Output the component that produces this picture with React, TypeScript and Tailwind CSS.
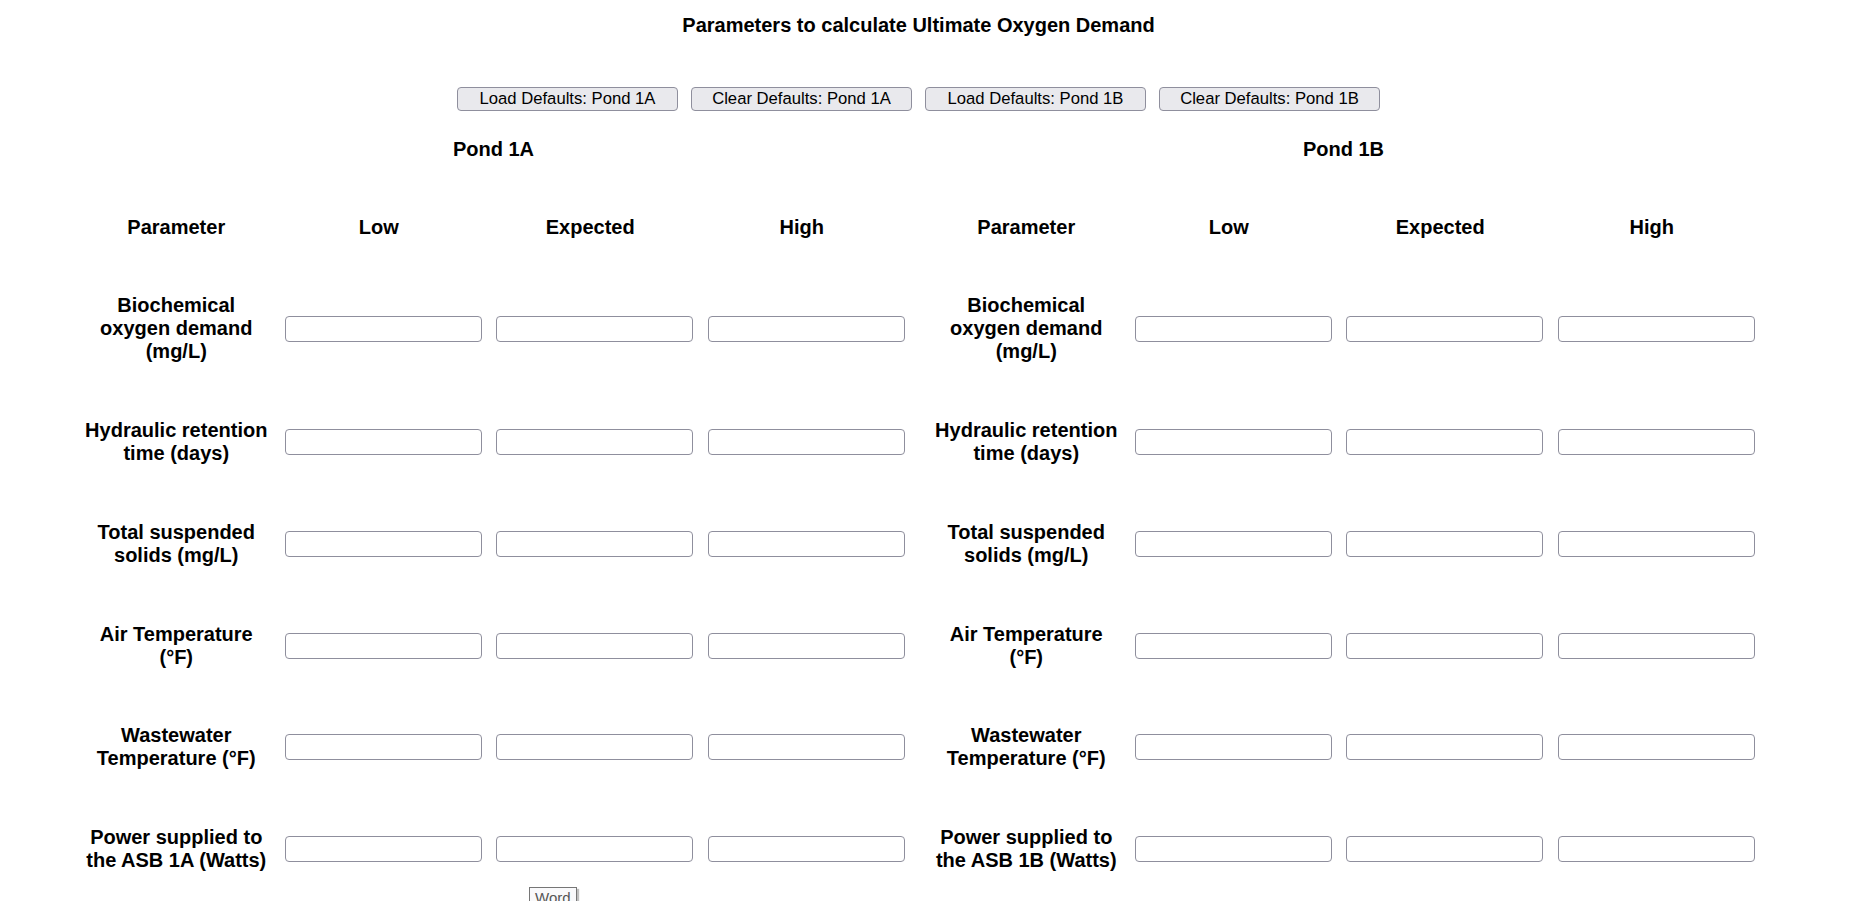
import React from 'react';

const buttons = [
  'Load Defaults: Pond 1A',
  'Clear Defaults: Pond 1A',
  'Load Defaults: Pond 1B',
  'Clear Defaults: Pond 1B',
];

const headers = ['Parameter', 'Low', 'Expected', 'High'];

const paramLabels = (pond: string) => [
  'Biochemical oxygen demand (mg/L)',
  'Hydraulic retention time (days)',
  'Total suspended solids (mg/L)',
  'Air Temperature (°F)',
  'Wastewater Temperature (°F)',
  `Power supplied to the ASB ${pond} (Watts)`,
];

const ValueInput = () => (
  <div className="flex items-center">
    <input
      type="text"
      className="ml-[11.75px] h-[26px] w-[197px] rounded-[4px] border border-[#8f8f9d] bg-white px-[3px] text-[16.67px] font-normal"
    />
  </div>
);

const PondTable = ({ pond }: { pond: string }) => (
  <div className="grid w-[828px] grid-cols-[193.5px_211.5px_211.5px_211.5px] items-center">
    <div className="col-span-4 pt-[27px] pb-[26.7px] text-center">Pond {pond}</div>
    {headers.map((h) => (
      <div key={h} className="py-[27.9px] text-center">
        {h}
      </div>
    ))}
    {paramLabels(pond).map((label) => (
      <React.Fragment key={label}>
        <div className="px-[3px] py-[27.9px] text-center">{label}</div>
        <ValueInput />
        <ValueInput />
        <ValueInput />
      </React.Fragment>
    ))}
  </div>
);

export default function App() {
  return (
    <div className="relative h-[901px] w-full overflow-hidden bg-white font-['Liberation_Sans',Arial,sans-serif] text-black">
      <div className="flex w-[1837px] flex-col items-center">
        <h3 className="pt-[13.6px] text-center text-[20px] leading-[23px] font-bold">
          Parameters to calculate Ultimate Oxygen Demand
        </h3>

        <div className="mt-[50.4px] flex gap-[13px]">
          {buttons.map((b) => (
            <button
              key={b}
              type="button"
              className="flex h-[24px] w-[221px] items-center justify-center rounded-[4px] border border-[#8f8f9d] bg-[#e9e9ed] text-[16.67px] leading-none text-black"
            >
              {b}
            </button>
          ))}
        </div>

        <div className="flex gap-[22px] text-[20px] leading-[23px] font-bold">
          <PondTable pond="1A" />
          <PondTable pond="1B" />
        </div>
      </div>

      {/* tooltip hovering over the page, cut by the window edge */}
      <div className="absolute top-[887px] left-[529px] border border-[#767676] bg-[#f9f9fb] px-[5px] py-[1px] text-[15px] leading-[18px] text-[#555] shadow-[2px_2px_1px_rgba(0,0,0,0.25)]">
        Word
      </div>
    </div>
  );
}
